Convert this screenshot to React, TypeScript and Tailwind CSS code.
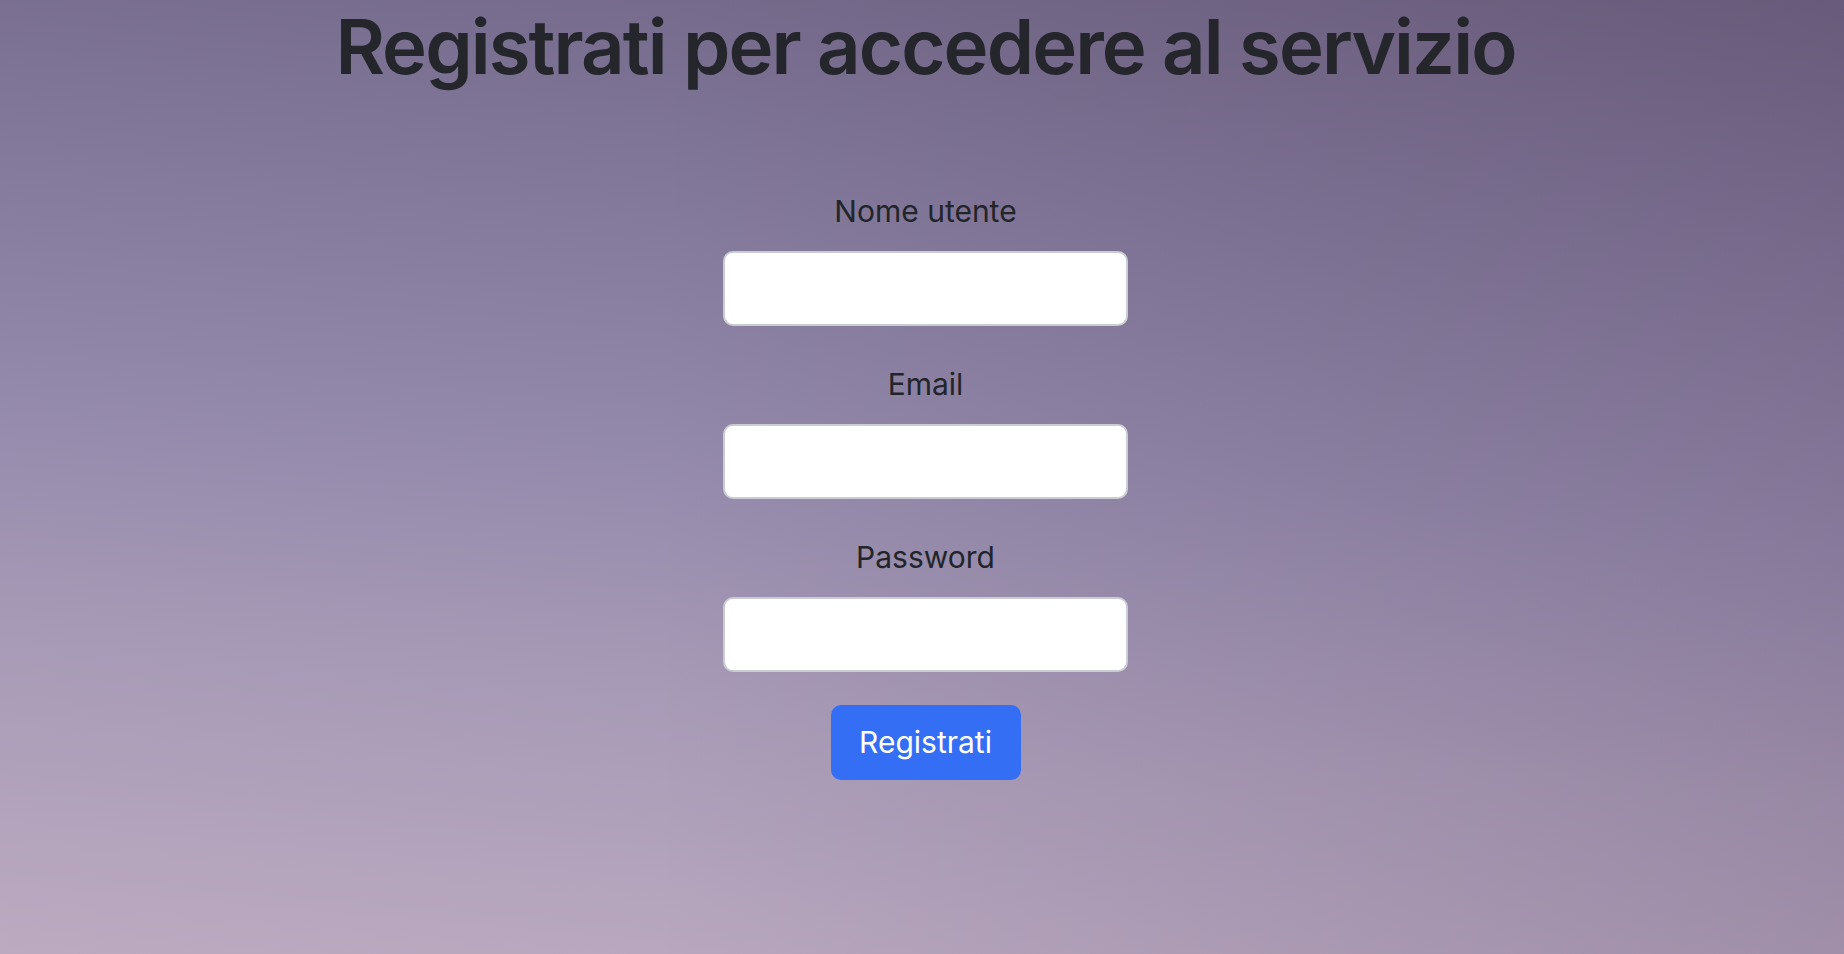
import React from 'react';

const fields = [
  { id: 'username', label: 'Nome utente', type: 'text' },
  { id: 'email', label: 'Email', type: 'email' },
  { id: 'password', label: 'Password', type: 'password' }
];

export default function App() {
  return (
    <div className="min-h-[954px] w-full bg-[linear-gradient(to_right,rgba(0,0,0,0)_35%,rgba(70,40,70,0.16)_100%),linear-gradient(185deg,#6f6484_0%,#7f7597_22%,#9288aa_48%,#a89bb7_72%,#bcaac0_100%)] font-['Inter','Noto_Sans',sans-serif] text-[#212529]">
      <div className="flex flex-col items-center pl-[7px]">
        <h1 className="m-0 text-[76px] font-semibold leading-[1.23] tracking-[-0.025em] text-[#24262b]">
          Registrati per accedere al servizio
        </h1>

        <form className="mt-[96px] flex flex-col items-center" onSubmit={(e) => e.preventDefault()}>
          {fields.map((f, i) => (
            <div key={f.id} className={i === 0 ? 'flex flex-col items-center' : 'mt-[36px] flex flex-col items-center'}>
              <label htmlFor={f.id} className="mb-[17px] block text-[30px] leading-[45px]">
                {f.label}
              </label>
              <input
                id={f.id}
                type={f.type}
                className="h-[75px] w-[405px] rounded-[10px] border-2 border-[#c9cdd3] bg-white px-4 text-[30px] outline-none"
              />
            </div>
          ))}

          <button
            type="submit"
            className="mt-[33px] h-[75px] w-[190px] rounded-[10px] bg-[#346ef5] text-[30px] text-white"
          >
            Registrati
          </button>
        </form>
      </div>
    </div>
  );
}
